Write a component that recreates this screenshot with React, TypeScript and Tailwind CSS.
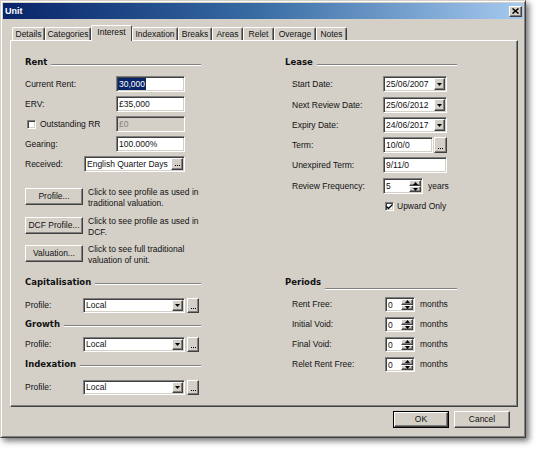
import type { ReactNode } from "react";

// Classic Windows 3D edges.
const SUNKEN =
  "border border-t-[#808080] border-l-[#808080] border-r-white border-b-white shadow-[inset_1px_1px_0_#404040,inset_-1px_-1px_0_#d4d0c8]";
const RAISED =
  "border border-t-white border-l-white border-r-[#404040] border-b-[#404040] bg-[#d4d0c8] shadow-[inset_-1px_-1px_0_#808080]";

const TABS = [
  { name: "Details", w: "w-[33px]" },
  { name: "Categories", w: "w-[46px]" },
  { name: "Interest", w: "w-[41px]", active: true },
  { name: "Indexation", w: "w-[46px]" },
  { name: "Breaks", w: "w-[34px]" },
  { name: "Areas", w: "w-[31px]" },
  { name: "Relet", w: "w-[31px]" },
  { name: "Overage", w: "w-[42px]" },
  { name: "Notes", w: "w-[31px]" },
];

function Arrow({ up = false }: { up?: boolean }) {
  return (
    <svg width="5" height="3" viewBox="0 0 5 3" className={up ? "rotate-180" : ""}>
      <path d="M0 0h5L2.5 3z" fill="#000" />
    </svg>
  );
}

function DropBtn() {
  return (
    <div className={`${RAISED} flex h-full w-[11px] shrink-0 items-center justify-center`}>
      <Arrow />
    </div>
  );
}

function DotsBtn({ className = "" }: { className?: string }) {
  return (
    <div className={`${RAISED} flex shrink-0 items-end justify-center gap-[1px] pb-[3px] ${className}`}>
      <span className="h-[1px] w-[1px] bg-black" />
      <span className="h-[1px] w-[1px] bg-black" />
      <span className="h-[1px] w-[1px] bg-black" />
    </div>
  );
}

function Heading({ title, w, className = "", line = "mt-[6px]" }: { title: string; w: string; className?: string; line?: string }) {
  return (
    <div className={`flex h-[14px] items-center ${w} ${className}`}>
      <span className="font-['DejaVu_Sans',sans-serif] text-[8.5px] font-bold leading-none">{title}</span>
      <div className={`ml-[4px] h-[2px] flex-1 border-t border-b border-t-[#808080] border-b-white ${line}`} />
    </div>
  );
}

function Row({ label, lw, className = "", children }: { label: ReactNode; lw: string; className?: string; children: ReactNode }) {
  return (
    <div className={`flex h-[16px] items-center ${className}`}>
      <span className={`${lw} shrink-0`}>{label}</span>
      {children}
    </div>
  );
}

function Edit({ value, w, disabled = false, children }: { value?: string; w: string; disabled?: boolean; children?: ReactNode }) {
  return (
    <div className={`${SUNKEN} flex h-full items-center ${w} ${disabled ? "bg-[#d4d0c8] text-[#808080]" : "bg-white"}`}>
      {children ?? <span className="pl-[2px]">{value}</span>}
    </div>
  );
}

function DateBox({ value }: { value: string }) {
  return (
    <div className={`${SUNKEN} flex h-full w-[64px] bg-white p-[1px]`}>
      <span className="flex-1 pl-[1px] leading-[12px]">{value}</span>
      <DropBtn />
    </div>
  );
}

function Combo({ value }: { value: string }) {
  return (
    <div className="flex h-[15px] items-center">
      <span className="w-[58px] shrink-0">Profile:</span>
      <div className={`${SUNKEN} flex h-full w-[102px] bg-white p-[1px]`}>
        <span className="flex-1 pl-[1px] leading-[11px]">{value}</span>
        <DropBtn />
      </div>
      <DotsBtn className="ml-[2px] h-[15px] w-[12px]" />
    </div>
  );
}

function Spin({ value, w }: { value: string; w: string }) {
  return (
    <div className={`${SUNKEN} flex h-full bg-white p-[1px] ${w}`}>
      <span className="flex-1 pl-[1px] leading-[12px]">{value}</span>
      <div className="flex w-[12px] flex-col">
        <div className={`${RAISED} flex flex-1 items-center justify-center`}>
          <Arrow up />
        </div>
        <div className={`${RAISED} flex flex-1 items-center justify-center`}>
          <Arrow />
        </div>
      </div>
    </div>
  );
}

function Check({ checked = false }: { checked?: boolean }) {
  return (
    <div className={`${SUNKEN} flex h-[9px] w-[9px] shrink-0 items-center justify-center bg-white`}>
      {checked && (
        <svg width="7" height="6" viewBox="0 0 7 6">
          <path d="M0.5 2.5L2.5 4.5L6.5 0.5" stroke="#000" strokeWidth="1.4" fill="none" />
        </svg>
      )}
    </div>
  );
}

function ActionRow({ label, lines, className = "" }: { label: string; lines: [string, string]; className?: string }) {
  // Fixed height: the two-line note hangs past the button without pushing rows down.
  return (
    <div className={`flex h-[17px] items-start ${className}`}>
      <div className={`${RAISED} flex h-[17px] w-[58px] shrink-0 items-center justify-center`}>{label}</div>
      <div className="ml-[5px] -mt-[1px] leading-[11px]">
        {lines[0]}
        <br />
        {lines[1]}
      </div>
    </div>
  );
}

function PeriodRow({ label, className = "" }: { label: string; className?: string }) {
  return (
    <div className={`flex h-[15px] items-center ${className}`}>
      <span className="ml-[7px] w-[93px] shrink-0">{label}</span>
      <Spin value="0" w="w-[30px]" />
      <span className="ml-[5px]">months</span>
    </div>
  );
}

export default function App() {
  return (
    <div className="min-h-screen bg-white font-['Liberation_Sans',Arial,sans-serif] text-[8.5px] text-[#111]">
      <div className="flex h-[438px] w-[526px] flex-col border border-t-[#d4d0c8] border-l-[#d4d0c8] border-r-[#404040] border-b-[#404040] bg-[#d4d0c8] p-[2px] shadow-[inset_1px_1px_0_#fff,inset_-1px_-1px_0_#808080,3px_3px_6px_rgba(0,0,0,0.55)]">
        {/* title bar */}
        <div className="flex h-[16px] shrink-0 items-center bg-linear-to-r from-[#0a246a] via-[#3a6ea5] to-[#a6caf0] pl-[2px] pr-[1px]">
          <span className="text-[9px] font-bold leading-none text-white">Unit</span>
          <div className={`${RAISED} ml-auto flex h-[11px] w-[13px] items-center justify-center`}>
            <svg width="7" height="6" viewBox="0 0 7 6">
              <path d="M0.5 0.5L6.5 5.5M6.5 0.5L0.5 5.5" stroke="#000" strokeWidth="1.5" />
            </svg>
          </div>
        </div>

        {/* tabs */}
        <div className="mt-[6px] flex h-[15px] shrink-0 items-end pl-[9px]">
          {TABS.map((t) =>
            t.active ? (
              <div
                key={t.name}
                className={`${t.w} relative z-10 -mb-[1px] flex h-[16px] items-center justify-center rounded-t-[2px] border-t border-l border-r border-t-white border-l-white border-r-[#404040] bg-[#d4d0c8] pb-[2px]`}
              >
                {t.name}
              </div>
            ) : (
              <div
                key={t.name}
                className={`${t.w} flex h-[13px] items-center justify-center rounded-t-[2px] border-t border-l border-r border-t-white border-l-white border-r-[#404040] shadow-[inset_-1px_0_0_#808080]`}
              >
                {t.name}
              </div>
            ),
          )}
        </div>

        {/* page */}
        <div className="ml-[7px] flex h-[367px] w-[508px] shrink-0 border border-t-white border-l-white border-r-[#404040] border-b-[#404040] shadow-[inset_-1px_-1px_0_#808080]">
          {/* left column */}
          <div className="flex w-[259px] flex-col pl-[14px] pt-[14px]">
            <Heading title="Rent" w="w-[176px]" />
            <Row label="Current Rent:" lw="w-[91px]" className="mt-[7px]">
              <Edit w="w-[69px]">
                <span className="ml-[1px] bg-[#0a246a] px-[1px] text-white">30,000</span>
              </Edit>
            </Row>
            <Row label="ERV:" lw="w-[91px]" className="mt-[4px]">
              <Edit w="w-[69px]" value="£35,000" />
            </Row>
            <Row
              label={
                <span className="flex items-center pl-[2px]">
                  <Check />
                  <span className="ml-[4px]">Outstanding RR</span>
                </span>
              }
              lw="w-[91px]"
              className="mt-[4px]"
            >
              <Edit w="w-[69px]" value="£0" disabled />
            </Row>
            <Row label="Gearing:" lw="w-[91px]" className="mt-[4px]">
              <Edit w="w-[69px]" value="100.000%" />
            </Row>
            <Row label="Received:" lw="w-[59px]" className="mt-[4px]">
              <div className={`${SUNKEN} flex h-full w-[101px] bg-white p-[1px]`}>
                <span className="flex-1 pl-[1px] leading-[12px]">English Quarter Days</span>
                <DotsBtn className="w-[12px]" />
              </div>
            </Row>

            <ActionRow className="mt-[16px]" label="Profile..." lines={["Click to see profile as used in", "traditional valuation."]} />
            <ActionRow className="mt-[12px]" label="DCF Profile..." lines={["Click to see profile as used in", "DCF."]} />
            <ActionRow className="mt-[11px]" label="Valuation..." lines={["Click to see full traditional", "valuation of unit."]} />

            <Heading title="Capitalisation" w="w-[176px]" className="mt-[13px]" line="mt-[3px]" />
            <div className="mt-[9px]">
              <Combo value="Local" />
            </div>
            <Heading title="Growth" w="w-[176px]" className="mt-[4px]" line="mt-[4px]" />
            <div className="mt-[6px]">
              <Combo value="Local" />
            </div>
            <Heading title="Indexation" w="w-[176px]" className="mt-[5px]" line="mt-[4px]" />
            <div className="mt-[9px]">
              <Combo value="Local" />
            </div>
          </div>

          {/* right column */}
          <div className="flex flex-1 flex-col pl-[15px] pt-[14px]">
            <Heading title="Lease" w="w-[172px]" />
            <Row label={<span className="ml-[7px]">Start Date:</span>} lw="w-[98px]" className="mt-[7px]">
              <DateBox value="25/06/2007" />
            </Row>
            <Row label={<span className="ml-[7px]">Next Review Date:</span>} lw="w-[98px]" className="mt-[5px]">
              <DateBox value="25/06/2012" />
            </Row>
            <Row label={<span className="ml-[7px]">Expiry Date:</span>} lw="w-[98px]" className="mt-[4px]">
              <DateBox value="24/06/2017" />
            </Row>
            <Row label={<span className="ml-[7px]">Term:</span>} lw="w-[98px]" className="mt-[4px]">
              <Edit w="w-[50px]" value="10/0/0" />
              <DotsBtn className="ml-[1px] h-full w-[13px]" />
            </Row>
            <Row label={<span className="ml-[7px]">Unexpired Term:</span>} lw="w-[98px]" className="mt-[4px]">
              <Edit w="w-[64px]" value="9/11/0" />
            </Row>
            <Row label={<span className="ml-[7px]">Review Frequency:</span>} lw="w-[98px]" className="mt-[5px]">
              <Spin value="5" w="w-[40px]" />
              <span className="ml-[5px]">years</span>
            </Row>
            <div className="mt-[8px] flex h-[9px] items-center pl-[100px]">
              <Check checked />
              <span className="ml-[3px]">Upward Only</span>
            </div>

            <Heading title="Periods" w="w-[172px]" className="mt-[64px]" line="mt-[14px]" />
            <PeriodRow label="Rent Free:" className="mt-[8px]" />
            <PeriodRow label="Initial Void:" className="mt-[5px]" />
            <PeriodRow label="Final Void:" className="mt-[5px]" />
            <PeriodRow label="Relet Rent Free:" className="mt-[5px]" />
          </div>
        </div>

        {/* dialog buttons */}
        <div className="mt-[4px] flex justify-end gap-[5px] pr-[13px]">
          <div className="flex h-[17px] w-[56px] items-center justify-center border border-black">
            <div className={`${RAISED} flex h-full w-full items-center justify-center`}>OK</div>
          </div>
          <div className={`${RAISED} flex h-[17px] w-[56px] items-center justify-center`}>Cancel</div>
        </div>
      </div>
    </div>
  );
}
